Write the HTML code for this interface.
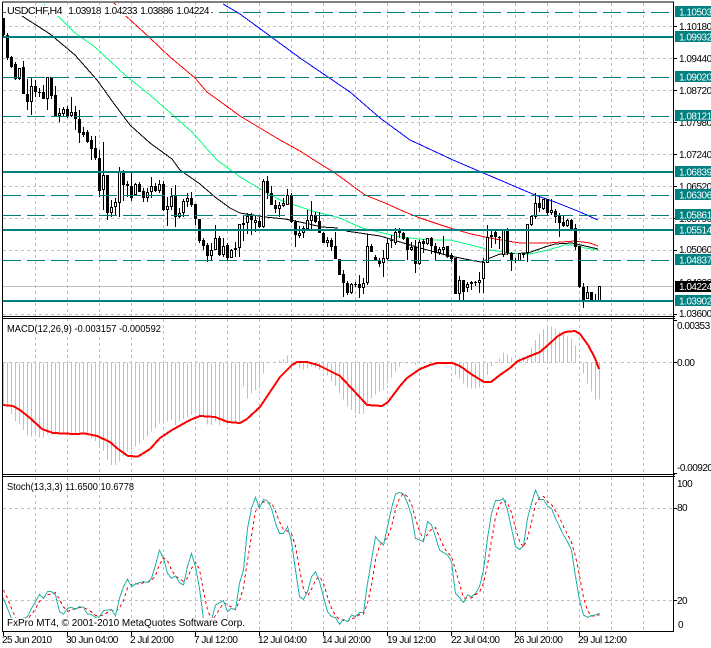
<!DOCTYPE html>
<html lang="en"><head><meta charset="utf-8"><title>USDCHF,H4</title>
<style>
html,body{margin:0;padding:0;background:#fff;overflow:hidden}
svg{display:block}
text{font-family:"Liberation Sans",sans-serif;font-size:10px;fill:#000;letter-spacing:-.5px}
.w{fill:#fff}
path,polyline{fill:none;shape-rendering:crispEdges}
rect{shape-rendering:crispEdges}
.ns{vector-effect:non-scaling-stroke}
</style></head><body>
<svg width="711" height="648" viewBox="0 0 711 648" xmlns="http://www.w3.org/2000/svg">
<rect width="711" height="648" fill="#fff"/>
<!-- grid -->
<path stroke="#c0c0c0" stroke-dasharray="3 3" d="M35.5 3V316M67.5 3V316M99.5 3V316M131.5 3V316M163.5 3V316M195.5 3V316M227.5 3V316M259.5 3V316M291.5 3V316M323.5 3V316M355.5 3V316M387.5 3V316M419.5 3V316M451.5 3V316M483.5 3V316M515.5 3V316M547.5 3V316M579.5 3V316M611.5 3V316M643.5 3V316
M35.5 319V474M67.5 319V474M99.5 319V474M131.5 319V474M163.5 319V474M195.5 319V474M227.5 319V474M259.5 319V474M291.5 319V474M323.5 319V474M355.5 319V474M387.5 319V474M419.5 319V474M451.5 319V474M483.5 319V474M515.5 319V474M547.5 319V474M579.5 319V474M611.5 319V474M643.5 319V474
M35.5 477V631M67.5 477V631M99.5 477V631M131.5 477V631M163.5 477V631M195.5 477V631M227.5 477V631M259.5 477V631M291.5 477V631M323.5 477V631M355.5 477V631M387.5 477V631M419.5 477V631M451.5 477V631M483.5 477V631M515.5 477V631M547.5 477V631M579.5 477V631M611.5 477V631M643.5 477V631
M3 26.5H673M3 58.5H673M3 90.5H673M3 122.5H673M3 154.5H673M3 186.5H673M3 218.5H673M3 250.5H673M3 314.5H673M3 362.5H673M3 508.5H673M3 600.5H673"/>
<path stroke="#c0c0c0" d="M3 286.5H673"/>
<!-- moving averages -->
<polyline stroke="#000" points="22,16 50,34 75,55 97,80 115,105 130,125 150,143 172,159 180,170 200,184 215,197 230,208 240,213 253,215 265,217 285,219 300,222 322,227 338,228"/>
<polyline stroke="#000" points="346,231 380,236 420,248 450,256 470,260 481,262 490,258 500,254 528,253 545,247 555,244 572,243 585,246 598,249"/>
<polyline stroke="#00ff7f" points="44,4 58,16 75,33 95,47 125,75 150,95 175,117 192,132 217,160 240,177 262,190 280,200 312,211 340,218 362,228 400,237 430,240 450,240 471,245 490,250 510,253 530,254 548,250 565,245 575,245 585,248 598,250"/>
<polyline stroke="#ff0000" points="114,3 126,16 150,38 170,57 195,78 207,92 225,105 240,116 260,128 280,140 300,151 314,160 335,173 365,195 385,203 405,212 420,218 450,228 471,234 495,239 520,243 548,243 575,241 590,243 598,246"/>
<polyline stroke="#0000ff" points="223,4 240,14 300,58 350,92 380,118 410,140 453,160 481,172 535,195 555,202 580,212 598,220"/>
<!-- candle wicks -->
<path stroke="#000" d="M3.5 18V37M7.5 33V60M11.5 56V68M15.5 62V80M19.5 68V80M23.5 61V94M27.5 79V110M31.5 78V115M35.5 80V97M39.5 88V97M43.5 85V99M47.5 77V110M51.5 77V99M55.5 86V117M59.5 108V122M63.5 107V117M67.5 106V118M71.5 97V117M75.5 106V130M79.5 110V143M83.5 127V137M87.5 130V143M91.5 136V160M95.5 136V160M99.5 150V197M103.5 142V210M107.5 175V220M111.5 200V217M115.5 198V216M119.5 167V217M123.5 170V201M127.5 181V197M131.5 173V201M135.5 183V195M139.5 182V192M143.5 188V202M147.5 188V202M151.5 177V198M155.5 183V192M159.5 180V193M163.5 181V211M167.5 197V226M171.5 188V210M175.5 185V227M179.5 208V218M183.5 199V217M187.5 193V207M191.5 192V207M195.5 204V225M199.5 219V243M203.5 238V250M207.5 243V262M211.5 243V260M215.5 225V250M219.5 236V256M223.5 238V257M227.5 243V261M231.5 249V258M235.5 242V257M239.5 224V257M243.5 215V241M247.5 213V234M251.5 213V235M255.5 215V232M259.5 217V228M263.5 179V228M267.5 176V199M271.5 186V205M275.5 200V213M279.5 202V217M283.5 198V207M287.5 189V205M291.5 193V223M295.5 220V247M299.5 226V238M303.5 226V238M307.5 210V230M311.5 201V229M315.5 212V223M319.5 212V233M323.5 232V243M327.5 237V247M331.5 238V251M335.5 232V259M339.5 259V275M343.5 270V297M347.5 281V295M351.5 283V294M355.5 282V287M359.5 275V298M363.5 278V294M367.5 234V285M371.5 244V252M375.5 255V261M379.5 258V267M383.5 250V277M387.5 238V260M391.5 235V248M395.5 228V245M399.5 228V238M403.5 232V240M407.5 237V260M411.5 242V251M415.5 240V273M419.5 240V265M423.5 239V253M427.5 238V245M431.5 237V254M435.5 243V260M439.5 247V255M443.5 236V255M447.5 246V258M451.5 253V262M455.5 258V294M459.5 276V300M463.5 280V300M467.5 282V292M471.5 281V290M475.5 281V286M479.5 272V293M483.5 258V293M487.5 225V263M491.5 230V248M495.5 231V244M499.5 236V249M503.5 230V257M507.5 228V255M511.5 252V271M515.5 258V263M519.5 253V261M523.5 253V258M527.5 224V262M531.5 216V226M535.5 193V219M539.5 197V212M543.5 199V210M547.5 199V215M551.5 199V215M555.5 209V223M559.5 213V237M563.5 216V227M567.5 219V227M571.5 219V230M575.5 224V250M579.5 246V288M583.5 283V308M587.5 286V299M591.5 292V302M595.5 294V302M599.5 286V302"/>
<!-- candle bodies -->
<path stroke="#000" stroke-width="3" d="M3.5 18V35M7.5 35V58M11.5 57V67M15.5 64V79M19.5 68V79M23.5 67V94M27.5 94V102M31.5 86V102M35.5 86V92M39.5 92V93M43.5 92V99M47.5 77V99M51.5 77V96M55.5 95V117M59.5 113V116M63.5 109V114M67.5 109V117M71.5 112V116M75.5 112V119M79.5 119V133M83.5 132V135M87.5 132V142M91.5 140V149M95.5 148V158M99.5 158V191M103.5 175V190M107.5 175V213M111.5 207V213M115.5 202V207M119.5 172V203M123.5 172V185M127.5 184V186M131.5 186V198M135.5 184V195M139.5 184V192M143.5 191V198M147.5 192V198M151.5 186V192M155.5 186V191M159.5 184V191M163.5 184V210M167.5 206V210M171.5 196V207M175.5 196V217M179.5 213V217M183.5 201V213M187.5 198V202M191.5 198V205M195.5 204V219M199.5 219V241M203.5 240V246M207.5 245V256M211.5 250V256M215.5 238V250M219.5 238V255M223.5 246V255M227.5 245V258M231.5 250V258M235.5 248V250M239.5 224V248M243.5 223V225M247.5 216V223M251.5 216V220M255.5 220V223M259.5 221V227M263.5 181V227M267.5 181V193M271.5 193V205M275.5 205V209M279.5 205V209M283.5 203V206M287.5 195V205M291.5 195V222M295.5 222V235M299.5 233V236M303.5 228V233M307.5 220V229M311.5 215V221M315.5 215V222M319.5 221V233M323.5 233V243M327.5 240V243M331.5 240V247M335.5 246V259M339.5 259V275M343.5 274V283M347.5 283V293M351.5 284V293M355.5 284V285M359.5 284V288M363.5 283V288M367.5 246V283M371.5 246V252M375.5 257V261M379.5 261V264M383.5 258V263M387.5 243V259M391.5 240V241M395.5 232V243M399.5 230V233M403.5 233V239M407.5 238V250M411.5 247V250M415.5 247V264M419.5 242V264M423.5 241V244M427.5 238V244M431.5 238V246M435.5 246V253M439.5 249V253M443.5 247V250M447.5 246V257M451.5 255V259M455.5 258V294M459.5 280V294M463.5 280V292M467.5 284V288M471.5 282V284M475.5 282V283M479.5 280V283M483.5 262V279M487.5 237V263M491.5 235V237M495.5 232V237M499.5 237V238M503.5 230V255M507.5 230V253M511.5 253V261M515.5 260V261M519.5 253V261M523.5 253V255M527.5 224V253M531.5 216V225M535.5 203V217M539.5 203V208M543.5 199V209M547.5 199V213M551.5 210V213M555.5 211V217M559.5 215V223M563.5 222V226M567.5 220V226M571.5 220V229M575.5 228V247M579.5 246V287M583.5 287V300M587.5 292V299M591.5 292V301M595.5 300V301M599.5 286V301"/>
<path stroke="#fff" d="M19.5 69V78M31.5 87V101M47.5 78V98M59.5 114V115M63.5 110V113M71.5 113V115M103.5 176V189M111.5 208V212M115.5 203V206M119.5 173V202M135.5 185V194M147.5 193V197M151.5 187V191M159.5 185V190M167.5 207V209M171.5 197V206M179.5 214V216M183.5 202V212M187.5 199V201M211.5 251V255M215.5 239V249M223.5 247V254M231.5 251V257M235.5 249V249M239.5 225V247M247.5 217V222M255.5 221V222M263.5 182V226M279.5 206V208M283.5 204V205M287.5 196V204M299.5 234V235M303.5 229V232M307.5 221V228M311.5 216V220M327.5 241V242M351.5 285V292M363.5 284V287M367.5 247V282M383.5 259V262M387.5 244V258M395.5 233V242M411.5 248V249M419.5 243V263M427.5 239V243M439.5 250V252M443.5 248V249M459.5 281V293M467.5 285V287M471.5 283V283M479.5 281V282M483.5 263V278M487.5 238V262M503.5 231V254M519.5 254V260M527.5 225V252M531.5 217V224M535.5 204V216M543.5 200V208M551.5 211V212M567.5 221V225M587.5 293V298M599.5 287V300"/>
<!-- horizontal object lines -->
<path stroke="#008080" stroke-width="2" d="M3 37H673M3 172H673M3 230H673M3 301H673"/>
<path stroke="#008080" stroke-dasharray="18 6" d="M3 12.5H673M3 77.5H673M3 116.5H673M3 195.5H673M3 215.5H673M3 260.5H673"/>
<!-- title -->
<rect x="6" y="5" width="205" height="11" fill="#fff"/>
<text x="7" y="14" textLength="55" lengthAdjust="spacingAndGlyphs">USDCHF,H4</text>
<text x="68.3" y="14">1.03918</text><text x="104.3" y="14">1.04233</text><text x="140.3" y="14">1.03886</text><text x="176.3" y="14">1.04224</text>
<!-- MACD histogram -->
<g transform="translate(0,315) scale(1,.33333)">
<path class="ns" stroke="#c0c0c0" d="M3.5 142V270M7.5 142V275M11.5 142V297M15.5 142V318M19.5 142V325M23.5 142V345M27.5 142V362M31.5 142V365M35.5 142V362M39.5 142V368M43.5 142V368M47.5 142V358M51.5 142V358M55.5 142V355M59.5 142V355M63.5 142V358M67.5 142V358M71.5 142V358M75.5 142V358M79.5 142V355M83.5 142V355M87.5 142V358M91.5 142V370M95.5 142V378M99.5 142V395M103.5 142V408M107.5 142V435M111.5 142V450M115.5 142V450M119.5 142V440M123.5 142V425M127.5 142V410M131.5 142V405M135.5 142V395M139.5 142V385M143.5 142V375M147.5 142V365M151.5 142V350M155.5 142V340M159.5 142V325M163.5 142V325M167.5 142V320M171.5 142V315M175.5 142V330M179.5 142V318M183.5 142V312M187.5 142V307M191.5 142V300M195.5 142V295M199.5 142V300M203.5 142V308M207.5 142V328M211.5 142V330M215.5 142V320M219.5 142V332M223.5 142V322M227.5 142V330M231.5 142V325M235.5 142V325M239.5 142V320M243.5 142V215M247.5 142V250M251.5 142V235M255.5 142V225M259.5 142V210M263.5 142V175M267.5 142V145M271.5 142V142M275.5 142V143M279.5 142V137M283.5 142V132M287.5 142V122M291.5 142V142M295.5 142V150M299.5 142V160M303.5 142V165M307.5 142V160M311.5 142V155M315.5 142V158M319.5 142V165M323.5 142V170M327.5 142V182M331.5 142V198M335.5 142V213M339.5 142V235M343.5 142V255M347.5 142V275M351.5 142V285M355.5 142V295M359.5 142V297M363.5 142V297M367.5 142V270M371.5 142V250M375.5 142V238M379.5 142V230M383.5 142V225M387.5 142V205M391.5 142V188M395.5 142V170M399.5 142V155M403.5 142V145M407.5 142V145M411.5 142V145M415.5 142V150M419.5 142V143M423.5 142V143M427.5 142V143M431.5 142V143M435.5 142V143M439.5 142V143M443.5 142V143M447.5 142V143M451.5 142V143M455.5 142V180M459.5 142V190M463.5 142V205M467.5 142V218M471.5 142V220M475.5 142V220M479.5 142V218M483.5 142V205M487.5 142V180M491.5 142V155M495.5 142V143M499.5 142V130M503.5 142V113M507.5 142V118M511.5 142V128M515.5 142V143M519.5 142V130M523.5 142V125M527.5 142V120M531.5 142V97M535.5 142V75M539.5 142V57M543.5 142V42M547.5 142V35M551.5 142V35M555.5 142V42M559.5 142V50M563.5 142V52M567.5 142V65M571.5 142V70M575.5 142V92M579.5 142V143M583.5 142V175M587.5 142V205M591.5 142V230M595.5 142V253M599.5 142V253"/>
</g>
<!-- MACD signal -->
<polyline stroke="#ff0000" stroke-width="2" points="3,405 13,406 20,410 30,418 42,429 53,433 75,434 85,433.5 97,436 110,442 118,449 128,456 138,456.5 150,449 160,438 172,430 190,420 200,416 215,417 228,422 240,423 247,419 260,407 272,389 280,377 292,365 297,362 307,362 318,365 340,376 355,392 367,405 382,406 388,402 400,386 407,378 420,369 430,365 437,363 452,363 460,366 471,374 484,382 491,382 500,375 510,368 518,361 530,356 540,352 548,345 558,336 565,332 575,331 580,334 588,345 595,358 599,369"/>
<rect x="6" y="321" width="156" height="13" fill="#fff"/>
<text x="7" y="332" textLength="154" lengthAdjust="spacingAndGlyphs" style="letter-spacing:0">MACD(12,26,9) -0.003157 -0.000592</text>
<!-- Stochastic -->
<g transform="translate(0,470) scale(1,.33333)">
<polyline class="ns" stroke="#ff0000" stroke-dasharray="3 3" points="3.5,360 7.5,385 11.5,415 15.5,443 19.5,458 23.5,458 27.5,448 31.5,433 35.5,417 39.5,394 43.5,384 47.5,374 51.5,372 55.5,368 59.5,388 63.5,411 67.5,424 71.5,420 75.5,415 79.5,413 83.5,413 87.5,418 91.5,426 95.5,436 99.5,438 103.5,435 107.5,427 111.5,420 115.5,425 119.5,414 123.5,391 127.5,354 131.5,343 135.5,340 139.5,343 143.5,338 147.5,337 151.5,332 155.5,316 159.5,283 163.5,263 167.5,272 171.5,300 175.5,318 179.5,327 183.5,334 187.5,324 191.5,295 195.5,277 199.5,298 203.5,364 207.5,419 211.5,451 215.5,437 219.5,418 223.5,398 227.5,405 231.5,411 235.5,420 239.5,392 243.5,353 247.5,272 251.5,197 255.5,124 259.5,104 263.5,95 267.5,99 271.5,99 275.5,123 279.5,155 283.5,180 287.5,183 291.5,192 295.5,228 299.5,298 303.5,356 307.5,378 311.5,358 315.5,330 319.5,320 323.5,340 327.5,380 331.5,415 335.5,436 339.5,449 343.5,451 347.5,455 351.5,446 355.5,443 359.5,434 363.5,432 367.5,399 371.5,346 375.5,270 379.5,228 383.5,213 387.5,203 391.5,170 395.5,119 399.5,85 403.5,70 407.5,80 411.5,102 415.5,147 419.5,183 423.5,210 427.5,193 431.5,178 435.5,173 439.5,202 443.5,229 447.5,248 451.5,259 455.5,300 459.5,342 463.5,383 467.5,385 471.5,384 475.5,374 479.5,366 483.5,340 487.5,285 491.5,212 495.5,142 499.5,105 503.5,90 507.5,99 511.5,127 515.5,175 519.5,214 523.5,232 527.5,204 531.5,158 535.5,102 539.5,83 543.5,79 547.5,95 551.5,104 555.5,123 559.5,143 563.5,170 567.5,193 571.5,217 575.5,258 579.5,317 583.5,382 587.5,422 591.5,438 595.5,438 599.5,434"/>
<polyline class="ns" stroke="#20b2aa" points="3.5,385 7.5,415 11.5,445 15.5,468 19.5,460 23.5,445 27.5,440 31.5,415 35.5,395 39.5,373 43.5,385 47.5,365 51.5,365 55.5,375 59.5,425 63.5,432 67.5,415 71.5,412 75.5,418 79.5,410 83.5,412 87.5,432 91.5,433 95.5,442 99.5,440 103.5,422 107.5,420 111.5,418 115.5,438 119.5,385 123.5,350 127.5,328 131.5,350 135.5,342 139.5,338 143.5,335 147.5,337 151.5,325 155.5,285 159.5,240 163.5,265 167.5,310 171.5,325 175.5,318 179.5,338 183.5,345 187.5,290 191.5,250 195.5,290 199.5,355 203.5,448 207.5,455 211.5,450 215.5,405 219.5,398 223.5,392 227.5,425 231.5,415 235.5,420 239.5,340 243.5,300 247.5,175 251.5,115 255.5,82 259.5,115 263.5,88 267.5,93 271.5,115 275.5,160 279.5,190 283.5,190 287.5,170 291.5,215 295.5,300 299.5,380 303.5,388 307.5,365 311.5,320 315.5,305 319.5,335 323.5,380 327.5,425 331.5,440 335.5,443 339.5,463 343.5,448 347.5,455 351.5,435 355.5,440 359.5,428 363.5,428 367.5,340 371.5,270 375.5,200 379.5,215 383.5,225 387.5,170 391.5,115 395.5,72 399.5,67 403.5,72 407.5,100 411.5,135 415.5,205 419.5,210 423.5,215 427.5,155 431.5,165 435.5,200 439.5,240 443.5,248 447.5,255 451.5,275 455.5,370 459.5,382 463.5,398 467.5,375 471.5,380 475.5,370 479.5,350 483.5,300 487.5,205 491.5,130 495.5,92 499.5,92 503.5,85 507.5,120 511.5,175 515.5,230 519.5,238 523.5,228 527.5,145 531.5,100 535.5,60 539.5,88 543.5,88 547.5,108 551.5,115 555.5,145 559.5,170 563.5,195 567.5,215 571.5,240 575.5,320 579.5,390 583.5,435 587.5,442 591.5,437 595.5,435 599.5,430"/>
</g>
<text x="7" y="490" textLength="127" lengthAdjust="spacingAndGlyphs" style="letter-spacing:0">Stoch(13,3,3) 11.6500 10.6778</text>
<rect x="6" y="618" width="240" height="11" fill="#fff"/>
<text x="7" y="626" textLength="238" lengthAdjust="spacingAndGlyphs" style="letter-spacing:0">FxPro MT4, © 2001-2010 MetaQuotes Software Corp.</text>
<!-- frame -->
<path stroke="#000" d="M2.5 2H674M2.5 2V632M673.5 2V632M2 316.5H675M2 318.5H675M2 474.5H675M2 476.5H675M2 631.5H674"/>
<!-- axis ticks -->
<path stroke="#000" d="M674 26.5H677M674 58.5H677M674 90.5H677M674 122.5H677M674 154.5H677M674 186.5H677M674 218.5H677M674 250.5H677M674 314.5H677M674 320.5H677M674 362.5H677M674 473.5H677M674 508.5H677M674 600.5H677
M3.5 632V636M67.5 632V636M131.5 632V636M195.5 632V636M259.5 632V636M323.5 632V636M387.5 632V636M451.5 632V636M515.5 632V636M579.5 632V636"/>
<!-- price axis text -->
<text x="679" y="30">1.10180</text><text x="679" y="62">1.09440</text><text x="679" y="94">1.08720</text><text x="679" y="126">1.07980</text><text x="679" y="158">1.07240</text><text x="679" y="190">1.06520</text><text x="679" y="222">1.05790</text><text x="679" y="253">1.05060</text><text x="679" y="286">1.04320</text><text x="679" y="317">1.03600</text>
<text x="677" y="329">0.00353</text><text x="677" y="366">0.00</text><text x="677" y="471">-0.00920</text>
<text x="677" y="487">100</text><text x="677" y="511">80</text><text x="677" y="604">20</text><text x="678" y="628">0</text>
<!-- price labels -->
<g fill="#008080"><rect x="675" y="6" width="36" height="11"/><rect x="675" y="31" width="36" height="11"/><rect x="675" y="71" width="36" height="11"/><rect x="675" y="110" width="36" height="11"/><rect x="675" y="166" width="36" height="11"/><rect x="675" y="189" width="36" height="11"/><rect x="675" y="209" width="36" height="11"/><rect x="675" y="224" width="36" height="11"/><rect x="675" y="254" width="36" height="11"/><rect x="675" y="295" width="36" height="11"/></g>
<rect x="675" y="281" width="36" height="11" fill="#000"/>
<g class="w"><text class="w" x="679" y="15.5">1.10503</text><text class="w" x="679" y="40.5">1.09932</text><text class="w" x="679" y="80.5">1.09020</text><text class="w" x="679" y="119.5">1.08121</text><text class="w" x="679" y="175.5">1.06839</text><text class="w" x="679" y="198.5">1.06306</text><text class="w" x="679" y="218.5">1.05861</text><text class="w" x="679" y="233.5">1.05514</text><text class="w" x="679" y="263.5">1.04837</text><text class="w" x="679" y="290">1.04224</text><text class="w" x="679" y="304.5">1.03902</text></g>
<!-- time axis -->
<g style="letter-spacing:-.45px"><text x="2" y="643">25 Jun 2010</text><text x="66" y="643">30 Jun 04:00</text><text x="130" y="643">2 Jul 20:00</text><text x="194" y="643">7 Jul 12:00</text><text x="258" y="643">12 Jul 04:00</text><text x="322" y="643">14 Jul 20:00</text><text x="387" y="643">19 Jul 12:00</text><text x="451" y="643">22 Jul 04:00</text><text x="514" y="643">26 Jul 20:00</text><text x="578" y="643">29 Jul 12:00</text></g>
</svg>
</body></html>
